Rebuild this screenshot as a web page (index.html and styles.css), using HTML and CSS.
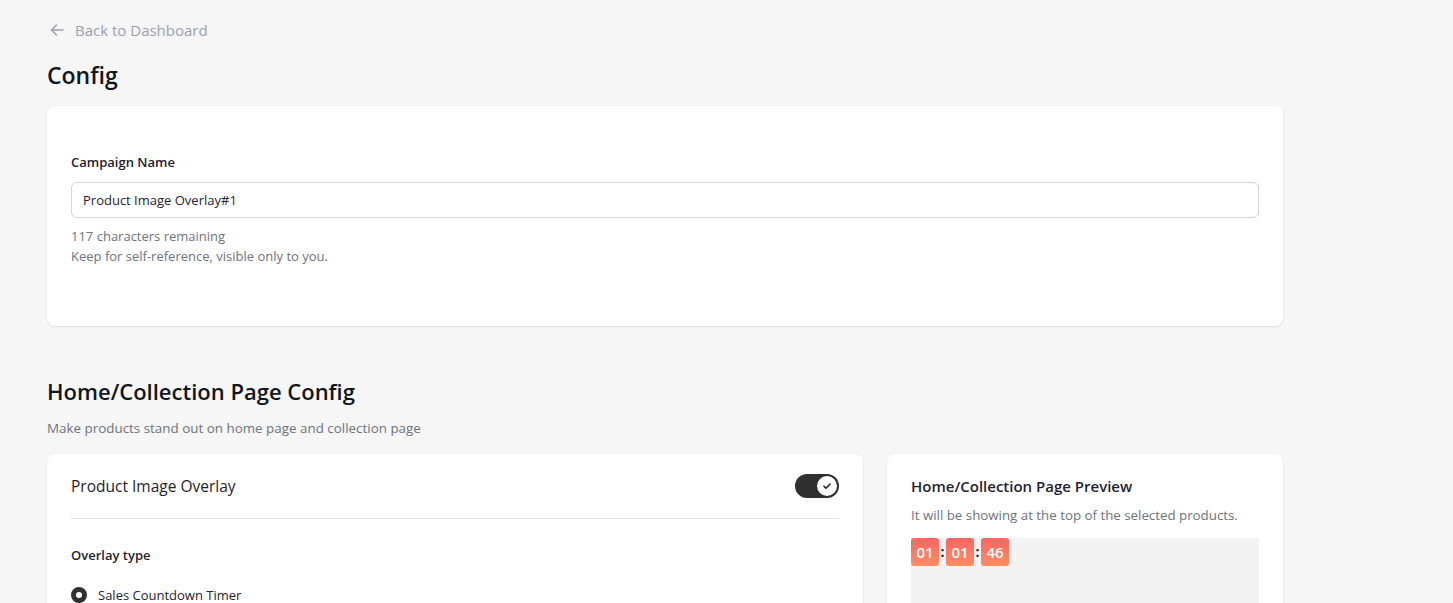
FILE: index.html
```html
<!DOCTYPE html>
<html lang="en">

<head>
    <meta charset="UTF-8">
    <meta name="viewport" content="width=device-width, initial-scale=1.0">
    <title>Config</title>
    <link rel="stylesheet" href="styles.css">
</head>

<body>
    <div class="page">
        <a class="back" href="#">
            <svg width="16" height="16" viewBox="0 0 16 16" fill="none" stroke="currentColor" stroke-width="1.5" stroke-linecap="round" stroke-linejoin="round">
                <path d="M14 8H2.5M7.5 3L2.5 8l5 5" />
            </svg>
            <span>Back to Dashboard</span>
        </a>

        <h1 class="title">Config</h1>

        <div class="card name-card">
            <label class="label" for="campaign">Campaign Name</label>
            <input class="field" type="text" id="campaign" value="Product Image Overlay#1" autocomplete="off">
            <p class="help">117 characters remaining</p>
            <p class="help">Keep for self-reference, visible only to you.</p>
        </div>

        <h2 class="section-title">Home/Collection Page Config</h2>
        <p class="section-sub">Make products stand out on home page and collection page</p>

        <div class="cols">
            <div class="card overlay-card">
                <div class="overlay-head">
                    <h3 class="card-title">Product Image Overlay</h3>
                    <div class="toggle">
                        <div class="knob">
                            <svg width="10" height="10" viewBox="0 0 10 10" fill="none" stroke="#222" stroke-width="1.6" stroke-linecap="round" stroke-linejoin="round">
                                <path d="M2 5.2l2 2 4-4.2" />
                            </svg>
                        </div>
                    </div>
                </div>
                <div class="divider"></div>
                <p class="label">Overlay type</p>
                <div class="radio-row">
                    <span class="radio"></span>
                    <span>Sales Countdown Timer</span>
                </div>
            </div>

            <div class="card preview-card">
                <h3 class="preview-title">Home/Collection Page Preview</h3>
                <p class="preview-sub">It will be showing at the top of the selected products.</p>
                <div class="preview-box">
                    <div class="timer">
                        <span class="digit">01</span>
                        <span class="colon">:</span>
                        <span class="digit">01</span>
                        <span class="colon">:</span>
                        <span class="digit">46</span>
                    </div>
                </div>
            </div>
        </div>
    </div>
</body>

</html>
```

FILE: styles.css
```css
* {
    margin: 0;
    padding: 0;
    box-sizing: border-box;
}

body {
    background-color: #f6f6f6;
    font-family: "Segoe UI", "Open Sans", "Noto Sans", sans-serif;
    color: #1f2330;
    overflow: hidden;
}

.page {
    width: 1236px;
    margin-left: 47px;
    padding-top: 19px;
}

.back {
    display: flex;
    align-items: center;
    gap: 10px;
    color: #9ca1ab;
    text-decoration: none;
    font-size: 15px;
    height: 22px;
    padding-left: 2px;
}

.title {
    font-size: 23px;
    font-weight: 600;
    color: #111520;
    margin-top: 19px;
    line-height: 30px;
}

.card {
    background: #fff;
    border-radius: 8px;
    box-shadow: 0 1px 2px rgba(0, 0, 0, 0.08), 0 0 0 1px rgba(0, 0, 0, 0.02);
}

.name-card {
    margin-top: 16px;
    height: 220px;
    padding: 47px 24px 0 24px;
}

.label {
    display: block;
    font-size: 13px;
    font-weight: 600;
    color: #1f2330;
    line-height: 18px;
}

.field {
    display: block;
    width: 100%;
    height: 36px;
    margin-top: 11px;
    border: 1px solid #d3d4da;
    border-radius: 6px;
    padding: 0 11px;
    font-family: inherit;
    font-size: 13px;
    color: #1f2330;
    outline: none;
}

.help {
    font-size: 13px;
    color: #6f737c;
    line-height: 20px;
}

.field + .help {
    margin-top: 8px;
}

.section-title {
    font-size: 22px;
    font-weight: 600;
    color: #111520;
    margin-top: 48px;
    line-height: 34px;
}

.section-sub {
    font-size: 13.4px;
    color: #6f737c;
    margin-top: 10px;
    line-height: 20px;
}

.cols {
    display: flex;
    gap: 24px;
    margin-top: 16px;
}

.overlay-card {
    width: 816px;
    height: 170px;
    padding: 0 24px;
}

.overlay-head {
    display: flex;
    justify-content: space-between;
    align-items: center;
    height: 64px;
}

.card-title {
    font-size: 15.5px;
    font-weight: 500;
    color: #1f2330;
}

.toggle {
    width: 44px;
    height: 24px;
    border-radius: 12px;
    background: #303030;
    display: flex;
    align-items: center;
    justify-content: flex-end;
    padding-right: 2px;
}

.knob {
    width: 20px;
    height: 20px;
    border-radius: 50%;
    background: #fff;
    display: flex;
    align-items: center;
    justify-content: center;
}

.divider {
    height: 1px;
    background: #e3e3e3;
}

.overlay-card .label {
    margin-top: 27px;
}

.radio-row {
    display: flex;
    align-items: center;
    gap: 11px;
    margin-top: 22px;
    font-size: 13px;
    color: #1f2330;
}

.radio {
    width: 16px;
    height: 16px;
    border-radius: 50%;
    border: 5px solid #303030;
    background: #fff;
}

.preview-card {
    width: 396px;
    height: 170px;
    padding: 22px 24px 0 24px;
}

.preview-title {
    font-size: 15px;
    font-weight: 600;
    color: #1f2330;
    line-height: 20px;
}

.preview-sub {
    font-size: 13.3px;
    color: #6f737c;
    margin-top: 9px;
    line-height: 20px;
}

.preview-box {
    margin-top: 13px;
    background: #f3f3f3;
    height: 120px;
}

.timer {
    display: flex;
    align-items: center;
}

.digit {
    width: 28px;
    height: 28px;
    border-radius: 3px;
    background: linear-gradient(180deg, #ff6464, #ff8d63);
    color: #fff;
    font-size: 15px;
    font-weight: 600;
    display: flex;
    align-items: center;
    justify-content: center;
}

.colon {
    width: 7px;
    text-align: center;
    font-size: 14px;
    font-weight: 700;
    color: #222;
    line-height: 28px;
}
```
